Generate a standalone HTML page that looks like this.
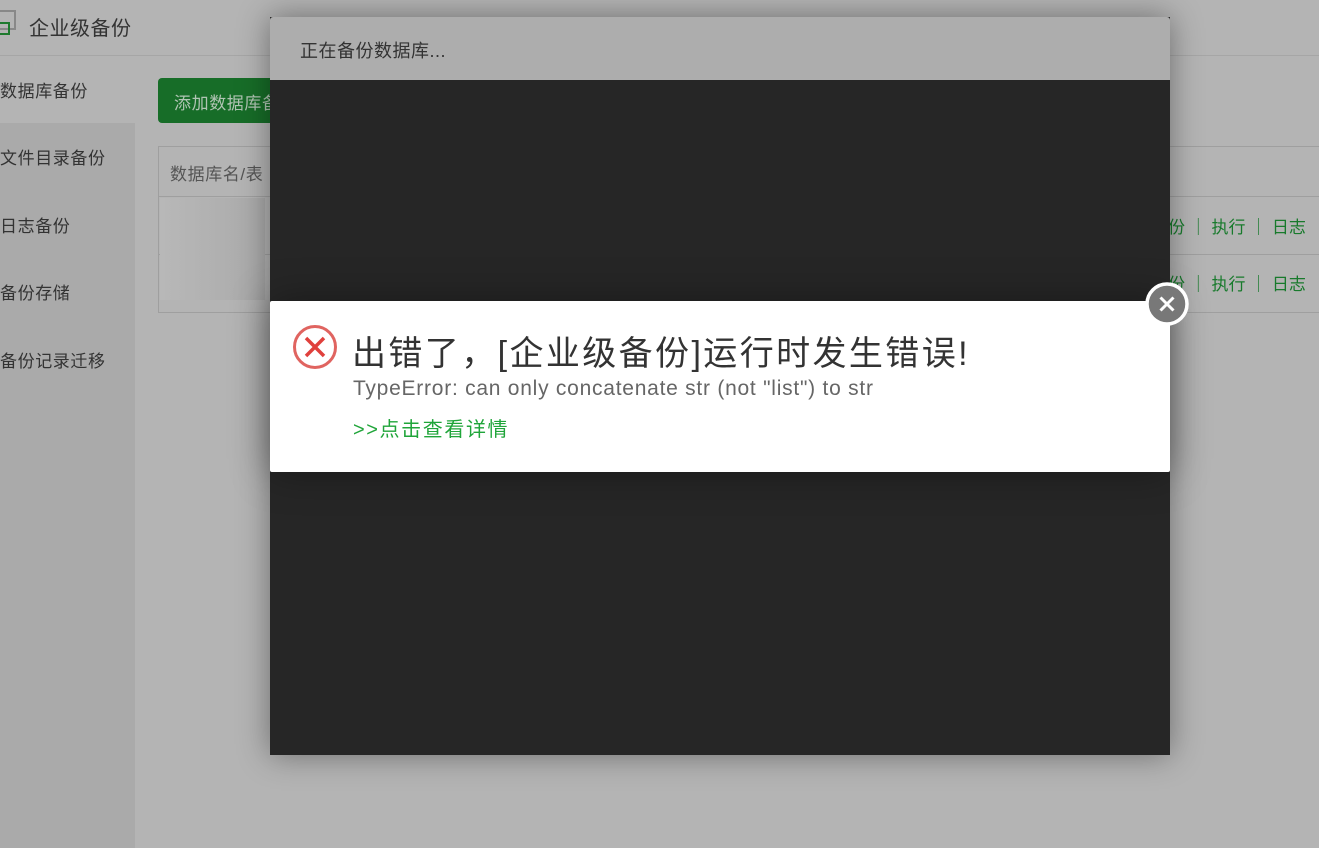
<!DOCTYPE html>
<html><head><meta charset="utf-8"><style>
body{margin:0;width:1319px;height:848px;overflow:hidden;background:#b4b4b4;font-family:"Liberation Sans","Noto Sans CJK SC",sans-serif;position:relative}
.a{position:absolute}
.s{font-size:17px;color:#333;letter-spacing:0.6px}
</style></head><body>
<div class="a" style="left:0;top:0;width:1319px;height:55px;border-bottom:1px solid #a6a6a6"></div>
<div class="a" style="left:0;top:10px;width:14px;height:16px;border:2px solid #888;border-left:none;"></div>
<div class="a" style="left:0;top:22px;width:8px;height:9px;border:2px solid #1e7a2e;border-left:none"></div>
<div class="a" style="left:29px;top:12px;font-size:20px;color:#333;letter-spacing:0.5px">企业级备份</div>
<div class="a" style="left:0;top:123px;width:135px;height:725px;background:#aaaaaa"></div>
<div class="a s" style="left:0;top:77px">数据库备份</div>
<div class="a s" style="left:0;top:144px">文件目录备份</div>
<div class="a s" style="left:0;top:212px">日志备份</div>
<div class="a s" style="left:0;top:279px">备份存储</div>
<div class="a s" style="left:0;top:347px">备份记录迁移</div>
<div class="a" style="left:158px;top:78px;width:140px;height:45px;background:#176d28;border-radius:4px"></div>
<div class="a" style="left:174px;top:89px;font-size:17px;color:#b0c4b3;letter-spacing:0.6px">添加数据库备</div>
<div class="a" style="left:158px;top:146px;width:1161px;height:165px;border:1px solid #9f9f9f;border-right:none"></div>
<div class="a" style="left:159px;top:196px;width:1160px;height:1px;background:#9f9f9f"></div>
<div class="a" style="left:159px;top:254px;width:1160px;height:1px;background:#9f9f9f"></div>
<div class="a" style="left:160px;top:198px;width:105px;height:102px;background:linear-gradient(90deg,#b8b8b8,#aaa)"></div>
<div class="a" style="left:170px;top:160px;font-size:17px;color:#555;letter-spacing:0.6px">数据库名/表</div>
<div class="a" style="left:1168px;top:213px;font-size:17px;color:#187a2c;white-space:pre">份 ｜ 执行 ｜ 日志</div>
<div class="a" style="left:1168px;top:270px;font-size:17px;color:#187a2c;white-space:pre">份 ｜ 执行 ｜ 日志</div>
<div class="a" style="left:270px;top:17px;width:900px;height:738px;background:#262626;box-shadow:0 0 30px rgba(0,0,0,.4)"></div>
<div class="a" style="left:270px;top:17px;width:900px;height:63px;background:#adadad;border-radius:3px 3px 0 0"></div>
<div class="a" style="left:300px;top:37px;font-size:18px;color:#333;letter-spacing:0.5px">正在备份数据库...</div>
<div class="a" style="left:270px;top:301px;width:900px;height:171px;background:#fff;border-radius:2px;box-shadow:0 0 40px rgba(0,0,0,.35)"></div>
<svg class="a" style="left:292px;top:324px" width="46" height="46" viewBox="0 0 46 46"><circle cx="23" cy="23" r="20.5" fill="none" stroke="#e06460" stroke-width="3"/><path d="M14 14L32 32M32 14L14 32" stroke="#e0403c" stroke-width="3.5"/></svg>
<div class="a" style="left:352px;top:326px;font-size:34px;color:#333;white-space:nowrap;letter-spacing:2.4px">出错了，[企业级备份]运行时发生错误!</div>
<div class="a" style="left:353px;top:377px;font-size:21px;color:#666;white-space:nowrap;letter-spacing:0.75px">TypeError: can only concatenate str (not "list") to str</div>
<div class="a" style="left:353px;top:413px;font-size:20px;color:#20a53a;white-space:nowrap;letter-spacing:1.6px">&gt;&gt;点击查看详情</div>
<svg class="a" style="left:1145px;top:282px" width="44" height="44" viewBox="0 0 44 44"><circle cx="22" cy="22" r="20" fill="#787878" stroke="#fff" stroke-width="3.5"/><path d="M15.5 15.5L28.5 28.5M28.5 15.5L15.5 28.5" stroke="#fff" stroke-width="3"/></svg>
</body></html>
